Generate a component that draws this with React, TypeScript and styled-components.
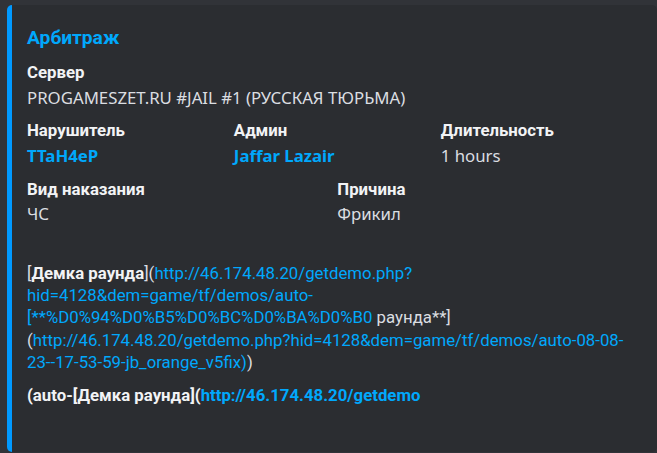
import React from "react";
import styled, { createGlobalStyle } from "styled-components";

const Global = createGlobalStyle`
  html, body { margin: 0; padding: 0; background: #313338; }
  body { font-family: "Noto Sans", "Open Sans", sans-serif; }
`;

const Page = styled.div`
  padding: 5px 0 0 7px;
  width: 657px;
  height: 453px;
  box-sizing: border-box;
  overflow: hidden;
`;

const Embed = styled.div`
  display: flex;
  flex-direction: column;
  background: #2b2d31;
  border-left: 5px solid #0099ff;
  border-radius: 5px;
  width: 650px;
  box-sizing: border-box;
  padding: 8px 19px 20px 15px;
`;

const Title = styled.div`
  margin-top: 12px;
  font-family: Roboto, "Noto Sans", sans-serif;
  font-size: 19.2px;
  font-weight: 700;
  line-height: 26px;
  color: #00a8fc;
`;

const Fields = styled.div`
  margin-top: 11px;
  display: grid;
  grid-template-columns: repeat(12, 1fr);
  column-gap: 9.6px;
  row-gap: 11.5px;
`;

const Field = styled.div<{ $span: number }>`
  grid-column: span ${(p) => p.$span};
  min-width: 0;
  display: flex;
  flex-direction: column;
`;

const Name = styled.div`
  font-family: Roboto, "Noto Sans", sans-serif;
  font-size: 16.8px;
  font-weight: 700;
  line-height: 21.6px;
  color: #f2f3f5;
  margin-bottom: 3px;
  white-space: nowrap;
`;

const Value = styled.div<{ $dense?: boolean }>`
  font-family: ${(p) => (p.$dense ? 'Roboto, "Noto Sans", sans-serif' : '"Noto Sans", sans-serif')};
  font-size: 16.8px;
  font-weight: 400;
  line-height: 22.3px;
  color: #dbdee1;
  white-space: nowrap;
`;

const Link = styled.span<{ $bold?: boolean }>`
  color: #00a8fc;
  font-weight: ${(p) => (p.$bold ? 700 : "inherit")};
`;

const Strong = styled.span`
  font-weight: 700;
  color: #f2f3f5;
`;

const Blank = styled.span`
  display: inline-block;
  width: 1px;
`;

export default function App() {
  return (
    <>
      <Global />
      <Page>
        <Embed>
          <Title>Арбитраж</Title>
          <Fields>
            <Field $span={12}>
              <Name>Сервер</Name>
              <Value>PROGAMESZET.RU #JAIL #1 (РУССКАЯ ТЮРЬМА)</Value>
            </Field>
            <Field $span={4}>
              <Name>Нарушитель</Name>
              <Value>
                <Link $bold>TTaH4eP</Link>
              </Value>
            </Field>
            <Field $span={4}>
              <Name>Админ</Name>
              <Value>
                <Link $bold>Jaffar Lazair</Link>
              </Value>
            </Field>
            <Field $span={4}>
              <Name>Длительность</Name>
              <Value>1 hours</Value>
            </Field>
            <Field $span={6}>
              <Name>Вид наказания</Name>
              <Value>ЧС</Value>
            </Field>
            <Field $span={6}>
              <Name>Причина</Name>
              <Value>Фрикил</Value>
            </Field>
            <Field $span={12}>
              <Name>
                <Blank>{"\u00a0"}</Blank>
              </Name>
              <Value $dense>
                [<Strong>Демка раунда</Strong>](
                <Link>http://46.174.48.20/getdemo.php?</Link>
                <br />
                <Link>hid=4128&amp;dem=game/tf/demos/auto-</Link>
                <br />
                <Link>[**%D0%94%D0%B5%D0%BC%D0%BA%D0%B0</Link> раунда**]
                <br />
                (<Link>http://46.174.48.20/getdemo.php?hid=4128&amp;dem=game/tf/demos/auto-08-08-</Link>
                <br />
                <Link>23--17-53-59-jb_orange_v5fix)</Link>)
              </Value>
            </Field>
            <Field $span={12}>
              <Name>
                (auto-[Демка раунда](<Link $bold>http://46.174.48.20/getdemo</Link>
              </Name>
              <Value>
                <Blank>{"\u00a0"}</Blank>
              </Value>
            </Field>
          </Fields>
        </Embed>
      </Page>
    </>
  );
}
